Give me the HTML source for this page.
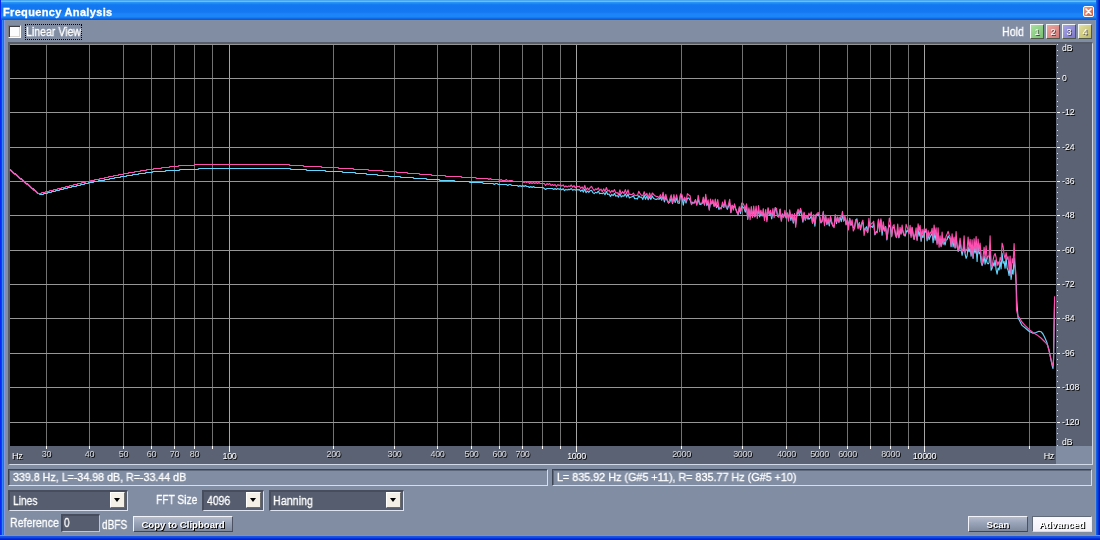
<!DOCTYPE html>
<html lang="en">
<head>
<meta charset="utf-8">
<title>Frequency Analysis</title>
<style>
*{box-sizing:border-box;margin:0;padding:0}
html,body{width:1100px;height:540px;overflow:hidden}
body{position:relative;background:#0a50e4;font-family:"Liberation Sans",sans-serif;font-size:11px;color:#fff}
.abs{position:absolute}
.t{position:absolute;white-space:nowrap;transform-origin:0 50%;line-height:1;will-change:transform;-webkit-text-stroke:0.3px #fff}
/* window frame */
#frameL{left:0;top:0;width:5px;height:540px;background:linear-gradient(to right,#0828f0 0px,#0828f0 1px,#0c3cf2 1px,#0c3cf2 2px,#3088ff 2px,#3088ff 3px,#2870d8 3px,#2870d8 4px,#8898dc 4px,#8898dc 5px)}
#frameR{left:1095px;top:0;width:5px;height:540px;background:linear-gradient(to right,#8292c4 0px,#8292c4 1px,#1460e8 1px,#1460e8 2px,#0848e4 2px,#0848e4 3px,#0430d4 3px,#0430d4 4px,#0018b8 4px,#0018b8 5px)}
#frameB{left:0;top:535px;width:1100px;height:5px;background:linear-gradient(to bottom,#7890d8 0px,#7890d8 1px,#1854e6 1px,#1854e6 2px,#0c4cee 2px,#0c4cee 3px,#0630d8 3px,#0630d8 4px,#0020cc 4px,#0020cc 5px)}
#title{left:1px;top:0;width:1095px;height:20px;background:linear-gradient(to bottom,#4ba8ee 0,#4ba8ee 1px,#5cc4fa 1px,#5cc4fa 2px,#2a94f6 2px,#2a94f6 3px,#167ef2 4px,#1276f0 6px,#1478f2 12px,#1c86f8 14px,#1c86f8 17px,#1270e8 18px,#0e62dc 19px,#0a56d0 20px)}
#title .t{left:2px;top:7px;font-weight:bold;font-size:11px;letter-spacing:0.33px}
#close{left:1083px;top:6px;width:11px;height:11px;border:1px solid #fff;border-radius:2px;background:linear-gradient(135deg,#eaa48c,#dc7858 60%,#c85838)}
#panel{left:4px;top:20px;width:1092px;height:515px;background:#808da3}
/* checkbox */
#chk{left:8px;top:25px;width:13px;height:13px;background:#fdfcff;border:1px solid;border-color:#7c7c80 #fff #fff #7c7c80;box-shadow:inset 1px 1px 0 #404044,inset -1px -1px 0 #d8d4d0}
#focus{left:25px;top:24px;width:57px;height:16px;border:1px dotted #000}
/* plot frame */
#pf{left:8px;top:42px;width:1085px;height:423px;border-top:2px solid #575e6a;border-left:2px solid #575e6a;border-right:1px solid #d2daea;border-bottom:1px solid #d2daea}
svg.plot{position:absolute;left:0;top:0;will-change:transform}
.btn,.hb{will-change:transform}
/* hold buttons */
.hb{position:absolute;top:24px;width:14px;height:15px;border-top:1px solid #f4f8f4;border-left:1px solid #f4f8f4;border-right:1px solid #50584c;border-bottom:1px solid #50584c;text-align:center;font-size:9px;line-height:15px;color:#fff;text-shadow:1px 1px 0 #404040}
/* status boxes */
.sb{position:absolute;top:469px;height:17px;border-top:1px solid #3c4454;border-left:1px solid #3c4454;border-right:1px solid #d6deee;border-bottom:1px solid #d6deee;background:#808da3;box-shadow:inset 1px 1px 0 #5e687c}
/* combos */
.cb{position:absolute;top:490px;height:21px;background:#565d6e;border-top:2px solid #474d5c;border-left:2px solid #474d5c;border-right:1px solid #dde3f0;border-bottom:1px solid #dde3f0}
.dd{position:absolute;right:2px;top:0;width:15px;height:16px;background:#f4f0e8;border-top:1px solid #fff;border-left:1px solid #fff;border-right:1px solid #6c6c6c;border-bottom:1px solid #6c6c6c}
.dd:after{content:"";position:absolute;left:3px;top:5px;border-left:3.5px solid transparent;border-right:3.5px solid transparent;border-top:4px solid #000}
/* buttons */
.btn{position:absolute;top:516px;height:16px;border-top:1px solid #f2f4fa;border-left:1px solid #f2f4fa;border-right:1px solid #4c5264;border-bottom:1px solid #5a3c50;background:linear-gradient(to bottom,#b4bccc 0,#98a2b8 45%,#808a9e 100%);text-align:center;font-weight:bold;font-size:9.6px;line-height:16px;color:#fff;text-shadow:1px 1px 0 #000;white-space:nowrap}
.btn.on{background:linear-gradient(to bottom,#fbfbff,#f2f0f6);border-color:#626a7a #eeeef4 #ecd0dc #626a7a}
</style>
</head>
<body>
<div id="panel" class="abs"></div>
<div id="frameL" class="abs"></div>
<div id="frameR" class="abs"></div>
<div id="frameB" class="abs"></div>
<div id="title" class="abs"><span class="t">Frequency Analysis</span></div>
<div id="close" class="abs"><svg width="9" height="9" viewBox="0 0 9 9" style="display:block"><path d="M2 2 L7 7 M7 2 L2 7" stroke="#fff" stroke-width="1.6" stroke-linecap="round" fill="none"/></svg></div>

<div id="chk" class="abs"></div>
<div id="focus" class="abs"></div>
<span class="t" id="lv" style="left:26px;top:26px;font-size:12px;transform:scaleX(0.88)">Linear View</span>

<span class="t" id="hold" style="left:1002px;top:26px;font-size:12px;transform:scaleX(0.89)">Hold</span>
<div class="hb" style="left:1030px;background:linear-gradient(135deg,#a8e0a0,#78c070)">1</div>
<div class="hb" style="left:1046px;background:linear-gradient(135deg,#eca8a0,#d07878)">2</div>
<div class="hb" style="left:1062px;background:linear-gradient(135deg,#a8a4e4,#7c78c8)">3</div>
<div class="hb" style="left:1078px;background:linear-gradient(135deg,#e4e0a0,#bcb868)">4</div>

<div id="pf" class="abs"></div>
<svg class="plot" width="1100" height="540" viewBox="0 0 1100 540">
<rect x="10" y="44" width="1046" height="402" fill="#000"/>
<rect x="1056" y="44" width="36" height="402" fill="#5b6273"/>
<rect x="10" y="446" width="1046" height="18" fill="#5b6273"/>
<g shape-rendering="crispEdges" fill="none">
<line x1="46.5" y1="44" x2="46.5" y2="446" stroke="#727272"/>
<line x1="89.5" y1="44" x2="89.5" y2="446" stroke="#727272"/>
<line x1="123.5" y1="44" x2="123.5" y2="446" stroke="#727272"/>
<line x1="151.5" y1="44" x2="151.5" y2="446" stroke="#727272"/>
<line x1="174.5" y1="44" x2="174.5" y2="446" stroke="#727272"/>
<line x1="194.5" y1="44" x2="194.5" y2="446" stroke="#727272"/>
<line x1="212.5" y1="44" x2="212.5" y2="446" stroke="#727272"/>
<line x1="229.5" y1="44" x2="229.5" y2="446" stroke="#a4a4a4"/>
<line x1="333.5" y1="44" x2="333.5" y2="446" stroke="#727272"/>
<line x1="394.5" y1="44" x2="394.5" y2="446" stroke="#727272"/>
<line x1="437.5" y1="44" x2="437.5" y2="446" stroke="#727272"/>
<line x1="471.5" y1="44" x2="471.5" y2="446" stroke="#727272"/>
<line x1="499.5" y1="44" x2="499.5" y2="446" stroke="#727272"/>
<line x1="522.5" y1="44" x2="522.5" y2="446" stroke="#727272"/>
<line x1="542.5" y1="44" x2="542.5" y2="446" stroke="#727272"/>
<line x1="560.5" y1="44" x2="560.5" y2="446" stroke="#727272"/>
<line x1="576.5" y1="44" x2="576.5" y2="446" stroke="#a4a4a4"/>
<line x1="681.5" y1="44" x2="681.5" y2="446" stroke="#727272"/>
<line x1="742.5" y1="44" x2="742.5" y2="446" stroke="#727272"/>
<line x1="786.5" y1="44" x2="786.5" y2="446" stroke="#727272"/>
<line x1="819.5" y1="44" x2="819.5" y2="446" stroke="#727272"/>
<line x1="847.5" y1="44" x2="847.5" y2="446" stroke="#727272"/>
<line x1="870.5" y1="44" x2="870.5" y2="446" stroke="#727272"/>
<line x1="890.5" y1="44" x2="890.5" y2="446" stroke="#727272"/>
<line x1="908.5" y1="44" x2="908.5" y2="446" stroke="#727272"/>
<line x1="924.5" y1="44" x2="924.5" y2="446" stroke="#a4a4a4"/>
<line x1="1029.5" y1="44" x2="1029.5" y2="446" stroke="#727272"/>
<line x1="10" y1="44.5" x2="1056" y2="44.5" stroke="#969696"/>
<line x1="10" y1="78.5" x2="1056" y2="78.5" stroke="#969696"/>
<line x1="10" y1="112.5" x2="1056" y2="112.5" stroke="#969696"/>
<line x1="10" y1="147.5" x2="1056" y2="147.5" stroke="#969696"/>
<line x1="10" y1="181.5" x2="1056" y2="181.5" stroke="#969696"/>
<line x1="10" y1="215.5" x2="1056" y2="215.5" stroke="#969696"/>
<line x1="10" y1="250.5" x2="1056" y2="250.5" stroke="#969696"/>
<line x1="10" y1="284.5" x2="1056" y2="284.5" stroke="#969696"/>
<line x1="10" y1="318.5" x2="1056" y2="318.5" stroke="#969696"/>
<line x1="10" y1="353.5" x2="1056" y2="353.5" stroke="#969696"/>
<line x1="10" y1="387.5" x2="1056" y2="387.5" stroke="#969696"/>
<line x1="10" y1="422.5" x2="1056" y2="422.5" stroke="#969696"/>
</g>
<g fill="none" stroke-width="1.15" stroke-linejoin="round">
<polyline stroke="#62d6ff" points="10.0,169.5 11.0,170.5 12.0,171.5 13.0,172.5 14.0,173.5 15.0,173.5 16.0,174.5 17.0,175.5 18.0,176.5 19.0,177.5 20.0,178.5 21.0,178.5 22.0,179.5 23.0,180.5 24.0,181.5 25.0,182.5 26.0,183.5 27.0,183.5 28.0,184.5 29.0,185.5 30.0,186.5 31.0,187.5 32.0,188.5 33.0,188.5 34.0,189.5 35.0,190.5 36.0,191.5 37.0,192.5 38.0,193.5 39.0,193.5 40.0,194.5 41.0,194.5 42.0,194.5 43.0,194.5 44.0,193.5 45.0,193.5 46.0,193.5 47.0,193.5 48.0,192.5 49.0,192.5 50.0,192.5 51.0,192.5 52.0,191.5 53.0,191.5 54.0,191.5 55.0,191.5 56.0,190.5 57.0,190.5 58.0,190.5 59.0,190.5 60.0,189.5 61.0,189.5 62.0,189.5 63.0,189.5 64.0,188.5 65.0,188.5 66.0,188.5 67.0,188.5 68.0,187.5 69.0,187.5 70.0,187.5 71.0,187.5 72.0,186.5 73.0,186.5 74.0,186.5 75.0,186.5 76.0,186.5 77.0,185.5 78.0,185.5 79.0,185.5 80.0,185.5 81.0,184.5 82.0,184.5 83.0,184.5 84.0,184.5 85.0,183.5 86.0,183.5 87.0,183.5 88.0,183.5 89.0,182.5 90.0,182.5 91.0,182.5 92.0,182.5 93.0,182.5 94.0,181.5 95.0,181.5 96.0,181.5 97.0,181.5 98.0,181.5 99.0,180.5 100.0,180.5 101.0,180.5 102.0,180.5 103.0,180.5 104.0,180.5 105.0,179.5 106.0,179.5 107.0,179.5 108.0,179.5 109.0,179.5 110.0,178.5 111.0,178.5 112.0,178.5 113.0,178.5 114.0,178.5 115.0,177.5 116.0,177.5 117.0,177.5 118.0,177.5 119.0,177.5 120.0,177.5 121.0,176.5 122.0,176.5 123.0,176.5 124.0,176.5 125.0,176.5 126.0,176.5 127.0,175.5 128.0,175.5 129.0,175.5 130.0,175.5 131.0,175.5 132.0,175.5 133.0,174.5 134.0,174.5 135.0,174.5 136.0,174.5 137.0,174.5 138.0,174.5 139.0,173.5 140.0,173.5 141.0,173.5 142.0,173.5 143.0,173.5 144.0,173.5 145.0,173.5 146.0,172.5 147.0,172.5 148.0,172.5 149.0,172.5 150.0,172.5 151.0,172.5 152.0,172.5 153.0,171.5 154.0,171.5 155.0,171.5 156.0,171.5 157.0,171.5 158.0,171.5 159.0,171.5 160.0,171.5 161.0,171.5 162.0,171.5 163.0,171.5 164.0,171.5 165.0,171.5 166.0,170.5 167.0,170.5 168.0,170.5 169.0,170.5 170.0,170.5 171.0,170.5 172.0,170.5 173.0,170.5 174.0,170.5 175.0,170.5 176.0,170.5 177.0,170.5 178.0,170.5 179.0,170.5 180.0,169.5 181.0,169.5 182.0,169.5 183.0,169.5 184.0,169.5 185.0,169.5 186.0,169.5 187.0,169.5 188.0,169.5 189.0,169.5 190.0,169.5 191.0,169.5 192.0,169.5 193.0,169.5 194.0,169.5 195.0,169.5 196.0,169.5 197.0,169.5 198.0,169.5 199.0,168.5 200.0,168.5 201.0,168.5 202.0,168.5 203.0,168.5 204.0,168.5 205.0,168.5 206.0,168.5 207.0,168.5 208.0,168.5 209.0,168.5 210.0,168.5 211.0,168.5 212.0,168.5 213.0,168.5 214.0,168.5 215.0,168.5 216.0,168.5 217.0,168.5 218.0,168.5 219.0,168.5 220.0,168.5 221.0,168.5 222.0,168.5 223.0,168.5 224.0,168.5 225.0,168.5 226.0,168.5 227.0,168.5 228.0,168.5 229.0,168.5 230.0,168.5 231.0,168.5 232.0,168.5 233.0,168.5 234.0,168.5 235.0,168.5 236.0,168.5 237.0,168.5 238.0,168.5 239.0,168.5 240.0,168.5 241.0,168.5 242.0,168.5 243.0,168.5 244.0,168.5 245.0,168.5 246.0,168.5 247.0,168.5 248.0,168.5 249.0,168.5 250.0,168.5 251.0,168.5 252.0,168.5 253.0,168.5 254.0,168.5 255.0,168.5 256.0,168.5 257.0,168.5 258.0,168.5 259.0,168.5 260.0,168.5 261.0,168.5 262.0,168.5 263.0,168.5 264.0,168.5 265.0,168.5 266.0,168.5 267.0,168.5 268.0,168.5 269.0,168.5 270.0,168.5 271.0,168.5 272.0,168.5 273.0,168.5 274.0,168.5 275.0,168.5 276.0,168.5 277.0,168.5 278.0,168.5 279.0,168.5 280.0,168.5 281.0,168.5 282.0,168.5 283.0,168.5 284.0,168.5 285.0,168.5 286.0,168.5 287.0,168.5 288.0,168.5 289.0,168.5 290.0,168.5 291.0,169.5 292.0,169.5 293.0,169.5 294.0,169.5 295.0,169.5 296.0,169.5 297.0,169.5 298.0,169.5 299.0,169.5 300.0,169.5 301.0,169.5 302.0,169.5 303.0,169.5 304.0,169.5 305.0,169.5 306.0,169.5 307.0,170.5 308.0,170.5 309.0,170.5 310.0,170.5 311.0,170.5 312.0,170.5 313.0,170.5 314.0,170.5 315.0,170.5 316.0,170.5 317.0,170.5 318.0,170.5 319.0,170.5 320.0,170.5 321.0,170.5 322.0,170.5 323.0,170.5 324.0,170.5 325.0,170.5 326.0,171.5 327.0,171.5 328.0,171.5 329.0,171.5 330.0,171.5 331.0,171.5 332.0,171.5 333.0,171.5 334.0,171.5 335.0,171.5 336.0,171.5 337.0,171.5 338.0,171.5 339.0,171.5 340.0,171.5 341.0,171.5 342.0,171.5 343.0,172.5 344.0,172.5 345.0,172.5 346.0,172.5 347.0,172.5 348.0,172.5 349.0,172.5 350.0,172.5 351.0,172.5 352.0,172.5 353.0,172.5 354.0,172.5 355.0,172.5 356.0,173.5 357.0,173.5 358.0,173.5 359.0,173.5 360.0,173.5 361.0,173.5 362.0,173.5 363.0,173.5 364.0,173.5 365.0,173.5 366.0,173.5 367.0,174.5 368.0,174.5 369.0,174.5 370.0,174.5 371.0,174.5 372.0,174.5 373.0,174.5 374.0,174.5 375.0,174.5 376.0,174.5 377.0,174.5 378.0,175.5 379.0,175.5 380.0,175.5 381.0,175.5 382.0,175.5 383.0,175.5 384.0,175.5 385.0,175.5 386.0,175.5 387.0,175.5 388.0,175.5 389.0,176.5 390.0,176.5 391.0,176.5 392.0,176.5 393.0,176.5 394.0,176.5 395.0,176.5 396.0,176.5 397.0,176.5 398.0,176.5 399.0,176.5 400.0,176.5 401.0,177.5 402.0,177.5 403.0,177.5 404.0,177.5 405.0,177.5 406.0,177.5 407.0,177.5 408.0,177.5 409.0,177.5 410.0,177.5 411.0,177.5 412.0,177.5 413.0,177.5 414.0,178.5 415.0,178.5 416.0,178.5 417.0,178.5 418.0,178.5 419.0,178.5 420.0,178.5 421.0,178.5 422.0,178.5 423.0,178.5 424.0,178.5 425.0,178.5 426.0,178.5 427.0,179.5 428.0,179.5 429.0,179.5 430.0,179.5 431.0,179.5 432.0,179.5 433.0,179.5 434.0,179.5 435.0,179.5 436.0,179.5 437.0,179.5 438.0,179.5 439.0,179.5 440.0,180.5 441.0,180.5 442.0,180.5 443.0,180.5 444.0,180.5 445.0,180.5 446.0,180.5 447.0,180.5 448.0,180.5 449.0,180.5 450.0,180.5 451.0,180.5 452.0,180.5 453.0,180.5 454.0,180.5 455.0,181.5 456.0,181.5 457.0,181.5 458.0,181.5 459.0,181.5 460.0,181.5 461.0,181.5 462.0,181.5 463.0,181.5 464.0,181.5 465.0,181.5 466.0,181.5 467.0,181.5 468.0,181.5 469.0,181.5 470.0,182.5 471.4,182.5 472.7,182.5 474.1,182.5 475.4,182.5 476.8,182.5 478.1,182.5 479.5,182.5 480.8,182.5 482.2,182.5 483.5,183.5 484.9,183.5 486.2,183.5 487.6,183.5 488.9,183.5 490.3,183.5 491.6,183.5 493.0,183.5 494.3,184.5 495.7,183.5 497.0,183.5 498.4,184.5 499.7,184.5 501.1,184.5 502.4,184.5 503.8,184.5 505.1,184.5 506.5,184.5 507.8,185.5 509.2,184.5 510.5,184.5 511.9,185.5 513.2,185.5 514.6,185.5 515.9,185.5 517.3,185.5 518.6,186.5 520.0,185.5 521.3,186.5 522.7,185.5 524.0,186.5 525.4,185.5 526.7,186.5 528.1,186.5 529.4,187.5 530.8,186.5 532.1,187.5 533.5,186.5 534.8,187.5 536.2,187.5 537.5,187.5 538.9,187.5 540.2,187.5 541.6,187.5 542.9,187.5 544.3,188.5 545.6,189.5 547.0,188.5 548.3,188.5 549.7,188.5 551.0,188.5 552.4,188.5 553.7,189.5 555.1,188.5 556.4,189.5 557.8,188.5 559.1,189.4 560.5,188.6 561.8,189.8 563.2,188.7 564.5,190.6 565.9,189.4 567.2,190.0 568.6,189.4 569.9,189.6 571.3,188.5 572.6,190.2 574.0,189.4 575.3,190.1 576.7,189.5 578.0,189.9 579.4,189.6 580.7,191.4 582.1,189.8 583.4,192.1 584.8,189.1 586.1,192.7 587.5,191.0 588.8,192.4 590.2,190.7 591.5,190.3 592.9,192.6 594.2,193.6 595.6,192.3 596.9,192.9 598.3,191.1 599.6,193.7 601.0,193.2 602.3,193.7 603.7,192.6 605.0,194.7 606.4,191.6 607.7,194.5 609.1,194.0 610.4,196.4 611.8,194.4 613.1,195.7 614.5,193.4 615.8,196.2 617.2,195.5 618.5,197.1 619.9,193.5 621.2,197.0 622.6,195.8 623.9,196.3 625.3,193.9 626.6,197.1 628.0,194.0 629.3,197.9 630.7,197.3 632.0,196.8 633.4,195.7 634.7,198.7 636.1,198.5 637.4,199.1 638.8,195.6 640.1,197.3 641.5,197.1 642.8,199.6 644.2,195.0 645.5,199.3 646.9,195.9 648.2,199.7 649.6,196.7 650.9,199.4 652.3,196.0 653.6,198.4 655.0,199.1 656.3,199.4 657.7,198.7 659.0,199.3 660.4,197.3 661.7,200.2 663.1,196.1 664.4,201.9 665.8,197.3 667.1,200.4 668.5,202.9 669.8,202.1 671.2,197.9 672.5,203.6 673.9,197.8 675.2,202.5 676.6,197.8 677.9,203.2 679.3,203.3 680.6,194.1 682.0,197.5 683.3,205.2 684.7,198.1 686.0,203.0 687.4,198.3 688.7,198.0 690.1,200.1 691.4,203.5 692.8,202.2 694.1,203.2 695.5,200.6 696.8,204.4 698.2,199.3 699.5,204.2 700.9,204.4 702.1,203.5 703.3,200.4 704.5,205.1 705.7,197.2 706.9,205.6 708.1,202.5 709.3,209.5 710.5,202.5 711.7,203.7 712.9,201.9 714.1,206.2 715.3,203.5 716.5,207.7 717.7,204.9 718.9,209.4 720.1,208.2 721.3,207.4 722.5,204.7 723.7,207.5 724.9,202.4 726.1,206.5 727.3,209.3 728.5,206.2 729.7,203.1 730.9,212.4 732.1,205.6 733.3,207.4 734.5,205.7 735.7,208.8 736.9,211.5 738.1,214.8 739.3,208.2 740.5,213.6 741.7,206.2 742.9,207.1 744.1,208.4 745.3,212.1 746.5,204.9 747.7,219.1 748.9,209.6 750.1,216.6 751.3,209.6 752.5,216.9 753.7,210.2 754.9,216.9 756.1,209.0 757.3,215.0 758.5,210.6 759.7,216.9 760.9,212.6 762.1,216.0 763.3,212.3 764.5,217.6 765.7,212.3 766.9,219.9 768.1,208.7 769.3,215.2 770.5,212.4 771.7,218.9 772.9,212.1 774.1,215.1 775.3,207.7 776.5,210.8 777.7,216.3 778.9,215.9 780.1,209.4 781.3,219.7 782.5,213.9 783.7,216.5 784.9,213.7 786.1,218.0 787.3,213.2 788.5,218.6 789.7,212.1 790.9,220.4 792.1,214.6 793.3,223.1 794.5,213.9 795.7,224.4 796.9,215.3 798.1,211.0 799.3,215.2 800.5,209.7 801.7,215.1 802.9,222.1 804.1,213.4 805.3,220.2 806.5,216.1 807.7,216.2 808.9,219.2 810.1,218.2 811.3,215.7 812.5,223.0 813.7,216.6 814.9,226.2 816.1,214.6 817.3,214.9 818.5,214.6 819.7,217.4 820.9,223.0 822.1,220.6 823.3,212.3 824.5,222.9 825.7,217.7 826.9,224.7 828.1,220.5 829.3,226.0 830.5,217.3 831.7,223.3 832.9,226.0 834.1,225.9 835.3,215.9 836.5,223.7 837.7,217.7 838.9,222.2 840.1,217.3 841.3,221.7 842.5,215.0 843.7,221.1 844.9,217.7 846.1,224.4 847.3,220.3 848.5,225.7 849.7,218.5 850.9,225.4 852.1,223.2 853.3,227.7 854.5,227.9 855.7,220.6 856.9,218.8 858.1,227.6 859.3,222.6 860.5,229.8 861.7,223.9 862.9,222.4 864.1,230.8 865.3,228.6 866.5,226.7 867.7,231.9 868.9,223.8 870.1,226.3 871.3,226.5 872.5,227.4 873.7,223.5 874.9,234.8 876.1,232.0 877.3,231.2 878.5,219.3 879.7,229.7 880.9,220.0 882.1,235.3 883.3,225.2 884.5,230.8 885.7,226.5 886.9,239.9 888.1,229.5 889.3,225.0 890.5,227.5 891.7,235.8 892.9,227.2 894.1,227.3 895.3,232.3 896.5,237.7 897.7,230.2 898.9,237.8 900.1,231.5 901.1,233.3 902.1,228.7 903.1,231.9 904.1,234.9 905.1,236.1 906.1,232.5 907.1,230.1 908.1,231.9 909.1,231.5 910.1,229.2 911.1,235.9 912.1,227.8 913.1,233.9 914.1,239.3 915.1,235.1 916.1,232.3 917.1,239.6 918.1,228.5 919.1,236.1 920.1,231.2 921.1,241.3 922.1,235.3 923.1,237.5 924.1,230.6 925.1,232.2 926.1,229.7 927.1,240.8 928.1,233.4 929.1,239.6 930.1,237.1 931.1,234.9 932.1,233.5 933.1,242.6 934.1,231.2 935.1,240.1 936.1,233.0 937.1,243.2 938.1,233.1 939.1,243.5 940.1,240.8 941.1,246.1 942.1,239.7 943.1,243.6 944.1,241.8 945.1,245.0 946.1,240.0 947.1,239.8 948.1,235.8 949.1,237.7 950.1,238.5 951.1,246.8 952.1,238.0 953.1,246.9 954.1,241.5 955.1,248.2 956.1,237.1 957.1,245.7 958.1,251.5 959.1,249.5 960.1,241.2 961.1,249.8 962.1,255.3 963.1,250.5 964.1,243.5 965.1,254.2 966.1,258.4 967.1,256.0 968.1,247.0 969.1,251.8 970.1,247.8 971.1,256.2 972.1,247.8 973.1,258.5 974.1,247.0 975.1,253.1 976.1,246.1 977.1,261.4 978.1,244.8 979.1,253.7 980.1,252.3 981.1,262.1 982.1,265.7 983.1,262.4 984.1,256.0 985.1,264.1 986.1,257.7 987.1,262.9 988.1,263.8 989.1,262.8 990.1,247.0 991.1,270.3 992.1,268.3 993.1,262.9 994.1,266.1 995.1,260.0 996.1,269.6 997.1,274.1 998.1,268.1 999.1,270.0 1000.1,261.7 1001.1,268.9 1002.1,253.4 1003.1,263.2 1004.1,261.6 1005.1,268.3 1006.1,257.9 1007.1,268.1 1008.1,270.2 1009.1,275.6 1010.1,265.1 1011.1,279.4 1012.1,269.9 1013.1,274.1 1014.1,258.1 1015.1,269.1 1016.3,285.0 1016.8,300.0 1018.0,317.6 1020.0,321.5 1022.0,325.4 1025.0,327.8 1029.0,331.3 1033.0,333.3 1036.0,332.5 1039.0,331.3 1041.0,331.7 1043.0,334.0 1045.0,338.0 1047.0,342.8 1049.0,350.0 1050.6,358.0 1052.0,365.0 1053.0,368.5 1053.6,359.0 1054.0,331.0 1054.6,300.0"/>
<polyline stroke="#ff4fb0" points="10.0,169.5 11.0,170.5 12.0,171.5 13.0,172.5 14.0,173.5 15.0,174.5 16.0,174.5 17.0,175.5 18.0,176.5 19.0,177.5 20.0,178.5 21.0,179.5 22.0,179.5 23.0,180.5 24.0,181.5 25.0,182.5 26.0,183.5 27.0,184.5 28.0,184.5 29.0,185.5 30.0,186.5 31.0,187.5 32.0,188.5 33.0,189.5 34.0,190.5 35.0,190.5 36.0,191.5 37.0,192.5 38.0,193.5 39.0,193.5 40.0,193.5 41.0,193.5 42.0,192.5 43.0,192.5 44.0,192.5 45.0,192.5 46.0,191.5 47.0,191.5 48.0,191.5 49.0,191.5 50.0,190.5 51.0,190.5 52.0,190.5 53.0,190.5 54.0,189.5 55.0,189.5 56.0,189.5 57.0,189.5 58.0,188.5 59.0,188.5 60.0,188.5 61.0,188.5 62.0,187.5 63.0,187.5 64.0,187.5 65.0,187.5 66.0,186.5 67.0,186.5 68.0,186.5 69.0,186.5 70.0,185.5 71.0,185.5 72.0,185.5 73.0,185.5 74.0,184.5 75.0,184.5 76.0,184.5 77.0,184.5 78.0,183.5 79.0,183.5 80.0,183.5 81.0,183.5 82.0,182.5 83.0,182.5 84.0,182.5 85.0,182.5 86.0,181.5 87.0,181.5 88.0,181.5 89.0,181.5 90.0,181.5 91.0,180.5 92.0,180.5 93.0,180.5 94.0,180.5 95.0,179.5 96.0,179.5 97.0,179.5 98.0,179.5 99.0,179.5 100.0,178.5 101.0,178.5 102.0,178.5 103.0,178.5 104.0,178.5 105.0,177.5 106.0,177.5 107.0,177.5 108.0,177.5 109.0,176.5 110.0,176.5 111.0,176.5 112.0,176.5 113.0,176.5 114.0,175.5 115.0,175.5 116.0,175.5 117.0,175.5 118.0,175.5 119.0,174.5 120.0,174.5 121.0,174.5 122.0,174.5 123.0,174.5 124.0,173.5 125.0,173.5 126.0,173.5 127.0,173.5 128.0,173.5 129.0,172.5 130.0,172.5 131.0,172.5 132.0,172.5 133.0,172.5 134.0,172.5 135.0,171.5 136.0,171.5 137.0,171.5 138.0,171.5 139.0,171.5 140.0,171.5 141.0,170.5 142.0,170.5 143.0,170.5 144.0,170.5 145.0,170.5 146.0,170.5 147.0,169.5 148.0,169.5 149.0,169.5 150.0,169.5 151.0,169.5 152.0,169.5 153.0,169.5 154.0,168.5 155.0,168.5 156.0,168.5 157.0,168.5 158.0,168.5 159.0,168.5 160.0,168.5 161.0,168.5 162.0,167.5 163.0,167.5 164.0,167.5 165.0,167.5 166.0,167.5 167.0,167.5 168.0,167.5 169.0,167.5 170.0,166.5 171.0,166.5 172.0,166.5 173.0,166.5 174.0,166.5 175.0,166.5 176.0,166.5 177.0,166.5 178.0,166.5 179.0,165.5 180.0,165.5 181.0,165.5 182.0,165.5 183.0,165.5 184.0,165.5 185.0,165.5 186.0,165.5 187.0,165.5 188.0,165.5 189.0,165.5 190.0,165.5 191.0,165.5 192.0,165.5 193.0,165.5 194.0,165.5 195.0,164.5 196.0,164.5 197.0,164.5 198.0,164.5 199.0,164.5 200.0,164.5 201.0,164.5 202.0,164.5 203.0,164.5 204.0,164.5 205.0,164.5 206.0,164.5 207.0,164.5 208.0,164.5 209.0,164.5 210.0,164.5 211.0,164.5 212.0,164.5 213.0,164.5 214.0,164.5 215.0,164.5 216.0,164.5 217.0,164.5 218.0,164.5 219.0,164.5 220.0,164.5 221.0,164.5 222.0,164.5 223.0,164.5 224.0,164.5 225.0,164.5 226.0,164.5 227.0,164.5 228.0,164.5 229.0,164.5 230.0,164.5 231.0,164.5 232.0,164.5 233.0,164.5 234.0,164.5 235.0,164.5 236.0,164.5 237.0,164.5 238.0,164.5 239.0,164.5 240.0,164.5 241.0,164.5 242.0,164.5 243.0,164.5 244.0,164.5 245.0,164.5 246.0,164.5 247.0,164.5 248.0,164.5 249.0,164.5 250.0,164.5 251.0,164.5 252.0,164.5 253.0,164.5 254.0,164.5 255.0,164.5 256.0,164.5 257.0,164.5 258.0,164.5 259.0,164.5 260.0,164.5 261.0,164.5 262.0,164.5 263.0,164.5 264.0,164.5 265.0,164.5 266.0,164.5 267.0,164.5 268.0,164.5 269.0,164.5 270.0,164.5 271.0,164.5 272.0,164.5 273.0,164.5 274.0,164.5 275.0,164.5 276.0,164.5 277.0,164.5 278.0,164.5 279.0,164.5 280.0,164.5 281.0,164.5 282.0,164.5 283.0,164.5 284.0,164.5 285.0,164.5 286.0,164.5 287.0,164.5 288.0,164.5 289.0,164.5 290.0,165.5 291.0,165.5 292.0,165.5 293.0,165.5 294.0,165.5 295.0,165.5 296.0,165.5 297.0,165.5 298.0,165.5 299.0,165.5 300.0,165.5 301.0,165.5 302.0,165.5 303.0,165.5 304.0,166.5 305.0,166.5 306.0,166.5 307.0,166.5 308.0,166.5 309.0,166.5 310.0,166.5 311.0,166.5 312.0,166.5 313.0,166.5 314.0,166.5 315.0,166.5 316.0,166.5 317.0,166.5 318.0,166.5 319.0,166.5 320.0,166.5 321.0,166.5 322.0,167.5 323.0,167.5 324.0,167.5 325.0,167.5 326.0,167.5 327.0,167.5 328.0,167.5 329.0,167.5 330.0,167.5 331.0,167.5 332.0,167.5 333.0,167.5 334.0,167.5 335.0,167.5 336.0,167.5 337.0,167.5 338.0,167.5 339.0,168.5 340.0,168.5 341.0,168.5 342.0,168.5 343.0,168.5 344.0,168.5 345.0,168.5 346.0,168.5 347.0,168.5 348.0,168.5 349.0,168.5 350.0,168.5 351.0,168.5 352.0,168.5 353.0,168.5 354.0,169.5 355.0,169.5 356.0,169.5 357.0,169.5 358.0,169.5 359.0,169.5 360.0,169.5 361.0,169.5 362.0,169.5 363.0,169.5 364.0,169.5 365.0,169.5 366.0,169.5 367.0,169.5 368.0,169.5 369.0,170.5 370.0,170.5 371.0,170.5 372.0,170.5 373.0,170.5 374.0,170.5 375.0,170.5 376.0,170.5 377.0,170.5 378.0,170.5 379.0,170.5 380.0,170.5 381.0,170.5 382.0,170.5 383.0,171.5 384.0,171.5 385.0,171.5 386.0,171.5 387.0,171.5 388.0,171.5 389.0,171.5 390.0,171.5 391.0,171.5 392.0,171.5 393.0,171.5 394.0,171.5 395.0,171.5 396.0,171.5 397.0,172.5 398.0,172.5 399.0,172.5 400.0,172.5 401.0,172.5 402.0,172.5 403.0,172.5 404.0,172.5 405.0,172.5 406.0,172.5 407.0,172.5 408.0,173.5 409.0,173.5 410.0,173.5 411.0,173.5 412.0,173.5 413.0,173.5 414.0,173.5 415.0,173.5 416.0,173.5 417.0,173.5 418.0,173.5 419.0,173.5 420.0,174.5 421.0,174.5 422.0,174.5 423.0,174.5 424.0,174.5 425.0,174.5 426.0,174.5 427.0,174.5 428.0,174.5 429.0,174.5 430.0,174.5 431.0,174.5 432.0,175.5 433.0,175.5 434.0,175.5 435.0,175.5 436.0,175.5 437.0,175.5 438.0,175.5 439.0,175.5 440.0,175.5 441.0,175.5 442.0,175.5 443.0,175.5 444.0,175.5 445.0,175.5 446.0,176.5 447.0,176.5 448.0,176.5 449.0,176.5 450.0,176.5 451.0,176.5 452.0,176.5 453.0,176.5 454.0,176.5 455.0,176.5 456.0,176.5 457.0,176.5 458.0,176.5 459.0,176.5 460.0,176.5 461.0,176.5 462.0,177.5 463.0,177.5 464.0,177.5 465.0,177.5 466.0,177.5 467.0,177.5 468.0,177.5 469.0,177.5 470.0,177.5 471.4,177.5 472.7,177.5 474.1,177.5 475.4,177.5 476.8,178.5 478.1,178.5 479.5,178.5 480.8,178.5 482.2,178.5 483.5,178.5 484.9,178.5 486.2,178.5 487.6,178.5 488.9,179.5 490.3,178.5 491.6,179.5 493.0,179.5 494.3,179.5 495.7,179.5 497.0,179.5 498.4,179.5 499.7,180.5 501.1,179.5 502.4,180.5 503.8,180.5 505.1,180.5 506.5,179.5 507.8,181.5 509.2,180.5 510.5,180.5 511.9,180.5 513.2,181.5 514.6,181.5 515.9,181.5 517.3,181.5 518.6,181.5 520.0,181.5 521.3,181.5 522.7,181.5 524.0,182.5 525.4,181.5 526.7,182.5 528.1,181.5 529.4,183.5 530.8,182.5 532.1,183.5 533.5,182.5 534.8,183.5 536.2,182.5 537.5,183.5 538.9,182.5 540.2,183.5 541.6,183.5 542.9,183.5 544.3,183.5 545.6,185.5 547.0,183.5 548.3,184.5 549.7,183.5 551.0,185.5 552.4,184.5 553.7,185.5 555.1,184.5 556.4,186.5 557.8,184.5 559.1,185.6 560.5,184.8 561.8,186.1 563.2,184.9 564.5,187.0 565.9,185.9 567.2,187.0 568.6,185.9 569.9,186.5 571.3,185.0 572.6,187.1 574.0,185.6 575.3,187.9 576.7,186.1 578.0,186.7 579.4,186.2 580.7,188.4 582.1,186.9 583.4,189.2 584.8,185.4 586.1,190.2 587.5,187.9 588.8,189.9 590.2,187.5 591.5,186.4 592.9,188.7 594.2,190.6 595.6,188.8 596.9,189.7 598.3,187.8 599.6,190.7 601.0,189.0 602.3,191.7 603.7,188.8 605.0,191.5 606.4,187.5 607.7,191.2 609.1,190.1 610.4,192.8 611.8,190.5 613.1,192.0 614.5,189.6 615.8,193.1 617.2,192.5 618.5,194.7 619.9,189.9 621.2,194.0 622.6,191.6 623.9,193.5 625.3,189.6 626.6,193.9 628.0,189.9 629.3,194.5 630.7,194.3 632.0,194.7 633.4,193.0 634.7,195.5 636.1,195.2 637.4,195.6 638.8,191.3 640.1,193.7 641.5,195.3 642.8,195.7 644.2,191.7 645.5,195.6 646.9,193.3 648.2,198.2 649.6,193.0 650.9,197.5 652.3,193.0 653.6,194.5 655.0,195.8 656.3,196.6 657.7,196.5 659.0,197.9 660.4,194.7 661.7,198.9 663.1,192.4 664.4,199.8 665.8,194.4 667.1,199.6 668.5,203.1 669.8,199.2 671.2,194.8 672.5,202.9 673.9,194.6 675.2,200.8 676.6,194.8 677.9,201.0 679.3,201.6 680.6,194.0 682.0,194.7 683.3,200.9 684.7,197.2 686.0,202.0 687.4,193.7 688.7,194.9 690.1,195.8 691.4,204.7 692.8,202.9 694.1,202.4 695.5,199.6 696.8,205.5 698.2,195.4 699.5,202.8 700.9,203.5 702.1,202.9 703.3,197.2 704.5,204.5 705.7,194.3 706.9,204.0 708.1,199.8 709.3,210.3 710.5,199.1 711.7,204.0 712.9,199.7 714.1,206.4 715.3,199.1 716.5,206.5 717.7,199.6 718.9,206.9 720.1,208.7 721.3,208.9 722.5,202.1 723.7,207.4 724.9,199.8 726.1,207.2 727.3,208.0 728.5,204.2 729.7,199.4 730.9,212.7 732.1,205.1 733.3,210.2 734.5,203.9 735.7,209.0 736.9,212.5 738.1,214.2 739.3,206.7 740.5,211.3 741.7,203.1 742.9,203.3 744.1,205.5 745.3,210.2 746.5,203.8 747.7,219.5 748.9,207.8 750.1,219.8 751.3,206.6 752.5,217.5 753.7,206.0 754.9,216.7 756.1,206.0 757.3,218.4 758.5,205.6 759.7,214.9 760.9,210.2 762.1,215.6 763.3,208.7 764.5,220.4 765.7,209.6 766.9,221.7 768.1,207.7 769.3,214.3 770.5,210.2 771.7,216.7 772.9,208.5 774.1,217.8 775.3,207.8 776.5,208.6 777.7,216.5 778.9,217.4 780.1,209.1 781.3,221.3 782.5,214.8 783.7,217.5 784.9,210.3 786.1,217.6 787.3,212.8 788.5,221.1 789.7,209.9 790.9,217.8 792.1,214.1 793.3,221.6 794.5,213.6 795.7,227.3 796.9,212.4 798.1,209.2 799.3,213.5 800.5,208.4 801.7,212.0 802.9,220.8 804.1,212.2 805.3,220.0 806.5,215.3 807.7,219.2 808.9,213.1 810.1,216.0 811.3,212.0 812.5,223.3 813.7,214.6 814.9,223.7 816.1,215.8 817.3,213.1 818.5,212.7 819.7,216.3 820.9,222.3 822.1,221.8 823.3,211.3 824.5,225.8 825.7,215.0 826.9,223.8 828.1,218.1 829.3,224.1 830.5,216.3 831.7,221.5 832.9,225.9 834.1,227.6 835.3,214.6 836.5,222.0 837.7,216.9 838.9,222.3 840.1,216.8 841.3,217.0 842.5,211.3 843.7,221.0 844.9,215.5 846.1,224.9 847.3,218.4 848.5,229.9 849.7,218.4 850.9,224.4 852.1,219.8 853.3,230.9 854.5,228.5 855.7,219.6 856.9,220.7 858.1,228.8 859.3,223.3 860.5,228.8 861.7,222.8 862.9,220.2 864.1,235.4 865.3,228.4 866.5,230.5 867.7,232.7 868.9,218.3 870.1,227.8 871.3,223.2 872.5,223.1 873.7,221.2 874.9,234.1 876.1,232.5 877.3,232.7 878.5,219.2 879.7,231.7 880.9,218.8 882.1,231.2 883.3,221.9 884.5,230.8 885.7,227.4 886.9,238.9 888.1,231.0 889.3,218.0 890.5,222.5 891.7,236.8 892.9,226.2 894.1,224.7 895.3,234.9 896.5,237.5 897.7,224.1 898.9,236.9 900.1,227.3 901.1,234.3 902.1,225.0 903.1,232.8 904.1,235.5 905.1,234.2 906.1,224.4 907.1,227.1 908.1,229.6 909.1,234.0 910.1,225.3 911.1,237.5 912.1,227.2 913.1,236.0 914.1,239.3 915.1,234.6 916.1,227.8 917.1,240.5 918.1,223.9 919.1,230.7 920.1,225.4 921.1,239.8 922.1,229.3 923.1,235.7 924.1,228.9 925.1,230.6 926.1,228.8 927.1,239.3 928.1,230.6 929.1,236.8 930.1,232.1 931.1,233.3 932.1,228.4 933.1,238.2 934.1,225.0 935.1,235.1 936.1,227.9 937.1,244.5 938.1,227.9 939.1,247.2 940.1,235.9 941.1,246.7 942.1,232.0 943.1,244.7 944.1,238.1 945.1,241.9 946.1,236.2 947.1,234.0 948.1,231.4 949.1,234.7 950.1,236.7 951.1,246.0 952.1,233.8 953.1,243.2 954.1,237.1 955.1,247.3 956.1,231.5 957.1,247.0 958.1,250.4 959.1,245.1 960.1,238.2 961.1,247.0 962.1,251.8 963.1,248.8 964.1,235.9 965.1,252.8 966.1,249.8 967.1,249.4 968.1,237.0 969.1,249.3 970.1,239.4 971.1,253.6 972.1,239.7 973.1,257.7 974.1,238.7 975.1,250.2 976.1,236.5 977.1,253.3 978.1,239.0 979.1,251.2 980.1,243.1 981.1,255.9 982.1,264.3 983.1,256.3 984.1,247.2 985.1,258.0 986.1,245.8 987.1,259.4 988.1,256.1 989.1,255.9 990.1,235.8 991.1,264.8 992.1,267.3 993.1,259.8 994.1,255.5 995.1,253.5 996.1,257.5 997.1,265.6 998.1,261.7 999.1,265.2 1000.1,257.5 1001.1,260.3 1002.1,243.2 1003.1,246.5 1004.1,254.8 1005.1,258.4 1006.1,252.5 1007.1,259.2 1008.1,256.7 1009.1,269.9 1010.1,256.0 1011.1,275.1 1012.1,258.7 1013.1,262.9 1014.1,243.5 1015.1,264.8 1016.0,275.0 1016.5,310.0 1018.0,316.0 1020.0,318.5 1021.5,321.5 1025.0,325.4 1029.0,329.4 1033.0,332.5 1037.0,334.9 1041.0,338.0 1045.0,342.0 1047.5,345.0 1049.0,350.6 1050.6,357.7 1052.0,364.0 1052.8,366.0 1053.5,359.0 1054.0,331.0 1054.6,296.3"/>
</g>
<g shape-rendering="crispEdges" stroke="#fff">
<line x1="46.5" y1="446" x2="46.5" y2="449"/>
<line x1="89.5" y1="446" x2="89.5" y2="449"/>
<line x1="123.5" y1="446" x2="123.5" y2="449"/>
<line x1="151.5" y1="446" x2="151.5" y2="449"/>
<line x1="174.5" y1="446" x2="174.5" y2="449"/>
<line x1="194.5" y1="446" x2="194.5" y2="449"/>
<line x1="212.5" y1="446" x2="212.5" y2="449"/>
<line x1="229.5" y1="446" x2="229.5" y2="452"/>
<line x1="333.5" y1="446" x2="333.5" y2="449"/>
<line x1="394.5" y1="446" x2="394.5" y2="449"/>
<line x1="437.5" y1="446" x2="437.5" y2="449"/>
<line x1="471.5" y1="446" x2="471.5" y2="449"/>
<line x1="499.5" y1="446" x2="499.5" y2="449"/>
<line x1="522.5" y1="446" x2="522.5" y2="449"/>
<line x1="542.5" y1="446" x2="542.5" y2="449"/>
<line x1="560.5" y1="446" x2="560.5" y2="449"/>
<line x1="576.5" y1="446" x2="576.5" y2="452"/>
<line x1="681.5" y1="446" x2="681.5" y2="449"/>
<line x1="742.5" y1="446" x2="742.5" y2="449"/>
<line x1="786.5" y1="446" x2="786.5" y2="449"/>
<line x1="819.5" y1="446" x2="819.5" y2="449"/>
<line x1="847.5" y1="446" x2="847.5" y2="449"/>
<line x1="870.5" y1="446" x2="870.5" y2="449"/>
<line x1="890.5" y1="446" x2="890.5" y2="449"/>
<line x1="908.5" y1="446" x2="908.5" y2="449"/>
<line x1="924.5" y1="446" x2="924.5" y2="452"/>
<line x1="1029.5" y1="446" x2="1029.5" y2="449"/>
<line x1="1057" y1="44.5" x2="1058" y2="44.5" stroke="#e0e2e8"/>
<line x1="1057" y1="50.5" x2="1058" y2="50.5" stroke="#e0e2e8"/>
<line x1="1057" y1="55.5" x2="1058" y2="55.5" stroke="#e0e2e8"/>
<line x1="1057" y1="61.5" x2="1058" y2="61.5" stroke="#e0e2e8"/>
<line x1="1057" y1="67.5" x2="1058" y2="67.5" stroke="#e0e2e8"/>
<line x1="1057" y1="72.5" x2="1058" y2="72.5" stroke="#e0e2e8"/>
<line x1="1057" y1="78.5" x2="1060" y2="78.5"/>
<line x1="1057" y1="84.5" x2="1058" y2="84.5" stroke="#e0e2e8"/>
<line x1="1057" y1="89.5" x2="1058" y2="89.5" stroke="#e0e2e8"/>
<line x1="1057" y1="95.5" x2="1058" y2="95.5" stroke="#e0e2e8"/>
<line x1="1057" y1="101.5" x2="1058" y2="101.5" stroke="#e0e2e8"/>
<line x1="1057" y1="106.5" x2="1058" y2="106.5" stroke="#e0e2e8"/>
<line x1="1057" y1="112.5" x2="1060" y2="112.5"/>
<line x1="1057" y1="118.5" x2="1058" y2="118.5" stroke="#e0e2e8"/>
<line x1="1057" y1="124.5" x2="1058" y2="124.5" stroke="#e0e2e8"/>
<line x1="1057" y1="130.5" x2="1058" y2="130.5" stroke="#e0e2e8"/>
<line x1="1057" y1="135.5" x2="1058" y2="135.5" stroke="#e0e2e8"/>
<line x1="1057" y1="141.5" x2="1058" y2="141.5" stroke="#e0e2e8"/>
<line x1="1057" y1="147.5" x2="1060" y2="147.5"/>
<line x1="1057" y1="153.5" x2="1058" y2="153.5" stroke="#e0e2e8"/>
<line x1="1057" y1="158.5" x2="1058" y2="158.5" stroke="#e0e2e8"/>
<line x1="1057" y1="164.5" x2="1058" y2="164.5" stroke="#e0e2e8"/>
<line x1="1057" y1="170.5" x2="1058" y2="170.5" stroke="#e0e2e8"/>
<line x1="1057" y1="175.5" x2="1058" y2="175.5" stroke="#e0e2e8"/>
<line x1="1057" y1="181.5" x2="1060" y2="181.5"/>
<line x1="1057" y1="187.5" x2="1058" y2="187.5" stroke="#e0e2e8"/>
<line x1="1057" y1="192.5" x2="1058" y2="192.5" stroke="#e0e2e8"/>
<line x1="1057" y1="198.5" x2="1058" y2="198.5" stroke="#e0e2e8"/>
<line x1="1057" y1="204.5" x2="1058" y2="204.5" stroke="#e0e2e8"/>
<line x1="1057" y1="209.5" x2="1058" y2="209.5" stroke="#e0e2e8"/>
<line x1="1057" y1="215.5" x2="1060" y2="215.5"/>
<line x1="1057" y1="221.5" x2="1058" y2="221.5" stroke="#e0e2e8"/>
<line x1="1057" y1="227.5" x2="1058" y2="227.5" stroke="#e0e2e8"/>
<line x1="1057" y1="232.5" x2="1058" y2="232.5" stroke="#e0e2e8"/>
<line x1="1057" y1="238.5" x2="1058" y2="238.5" stroke="#e0e2e8"/>
<line x1="1057" y1="244.5" x2="1058" y2="244.5" stroke="#e0e2e8"/>
<line x1="1057" y1="250.5" x2="1060" y2="250.5"/>
<line x1="1057" y1="256.5" x2="1058" y2="256.5" stroke="#e0e2e8"/>
<line x1="1057" y1="261.5" x2="1058" y2="261.5" stroke="#e0e2e8"/>
<line x1="1057" y1="267.5" x2="1058" y2="267.5" stroke="#e0e2e8"/>
<line x1="1057" y1="273.5" x2="1058" y2="273.5" stroke="#e0e2e8"/>
<line x1="1057" y1="278.5" x2="1058" y2="278.5" stroke="#e0e2e8"/>
<line x1="1057" y1="284.5" x2="1060" y2="284.5"/>
<line x1="1057" y1="290.5" x2="1058" y2="290.5" stroke="#e0e2e8"/>
<line x1="1057" y1="295.5" x2="1058" y2="295.5" stroke="#e0e2e8"/>
<line x1="1057" y1="301.5" x2="1058" y2="301.5" stroke="#e0e2e8"/>
<line x1="1057" y1="307.5" x2="1058" y2="307.5" stroke="#e0e2e8"/>
<line x1="1057" y1="312.5" x2="1058" y2="312.5" stroke="#e0e2e8"/>
<line x1="1057" y1="318.5" x2="1060" y2="318.5"/>
<line x1="1057" y1="324.5" x2="1058" y2="324.5" stroke="#e0e2e8"/>
<line x1="1057" y1="330.5" x2="1058" y2="330.5" stroke="#e0e2e8"/>
<line x1="1057" y1="336.5" x2="1058" y2="336.5" stroke="#e0e2e8"/>
<line x1="1057" y1="341.5" x2="1058" y2="341.5" stroke="#e0e2e8"/>
<line x1="1057" y1="347.5" x2="1058" y2="347.5" stroke="#e0e2e8"/>
<line x1="1057" y1="353.5" x2="1060" y2="353.5"/>
<line x1="1057" y1="359.5" x2="1058" y2="359.5" stroke="#e0e2e8"/>
<line x1="1057" y1="364.5" x2="1058" y2="364.5" stroke="#e0e2e8"/>
<line x1="1057" y1="370.5" x2="1058" y2="370.5" stroke="#e0e2e8"/>
<line x1="1057" y1="376.5" x2="1058" y2="376.5" stroke="#e0e2e8"/>
<line x1="1057" y1="381.5" x2="1058" y2="381.5" stroke="#e0e2e8"/>
<line x1="1057" y1="387.5" x2="1060" y2="387.5"/>
<line x1="1057" y1="393.5" x2="1058" y2="393.5" stroke="#e0e2e8"/>
<line x1="1057" y1="399.5" x2="1058" y2="399.5" stroke="#e0e2e8"/>
<line x1="1057" y1="404.5" x2="1058" y2="404.5" stroke="#e0e2e8"/>
<line x1="1057" y1="410.5" x2="1058" y2="410.5" stroke="#e0e2e8"/>
<line x1="1057" y1="416.5" x2="1058" y2="416.5" stroke="#e0e2e8"/>
<line x1="1057" y1="422.5" x2="1060" y2="422.5"/>
<line x1="1057" y1="428.5" x2="1058" y2="428.5" stroke="#e0e2e8"/>
<line x1="1057" y1="433.5" x2="1058" y2="433.5" stroke="#e0e2e8"/>
<line x1="1057" y1="439.5" x2="1058" y2="439.5" stroke="#e0e2e8"/>
<line x1="1057" y1="445.5" x2="1058" y2="445.5" stroke="#e0e2e8"/>
</g>
<g font-family="'Liberation Sans', sans-serif" font-size="9px" letter-spacing="-0.35">
<text x="47.5" y="457.8" text-anchor="middle" fill="#000" >30</text><text x="46.5" y="456.8" text-anchor="middle" fill="#d4d6dc" >30</text>
<text x="90.5" y="457.8" text-anchor="middle" fill="#000" >40</text><text x="89.5" y="456.8" text-anchor="middle" fill="#d4d6dc" >40</text>
<text x="124.5" y="457.8" text-anchor="middle" fill="#000" >50</text><text x="123.5" y="456.8" text-anchor="middle" fill="#d4d6dc" >50</text>
<text x="152.5" y="457.8" text-anchor="middle" fill="#000" >60</text><text x="151.5" y="456.8" text-anchor="middle" fill="#d4d6dc" >60</text>
<text x="175.5" y="457.8" text-anchor="middle" fill="#000" >70</text><text x="174.5" y="456.8" text-anchor="middle" fill="#d4d6dc" >70</text>
<text x="195.5" y="457.8" text-anchor="middle" fill="#000" >80</text><text x="194.5" y="456.8" text-anchor="middle" fill="#d4d6dc" >80</text>
<text x="230.5" y="459.5" text-anchor="middle" fill="#000" >100</text><text x="229.5" y="458.5" text-anchor="middle" fill="#fff" >100</text>
<text x="334.5" y="457.8" text-anchor="middle" fill="#000" >200</text><text x="333.5" y="456.8" text-anchor="middle" fill="#d4d6dc" >200</text>
<text x="395.5" y="457.8" text-anchor="middle" fill="#000" >300</text><text x="394.5" y="456.8" text-anchor="middle" fill="#d4d6dc" >300</text>
<text x="438.5" y="457.8" text-anchor="middle" fill="#000" >400</text><text x="437.5" y="456.8" text-anchor="middle" fill="#d4d6dc" >400</text>
<text x="472.5" y="457.8" text-anchor="middle" fill="#000" >500</text><text x="471.5" y="456.8" text-anchor="middle" fill="#d4d6dc" >500</text>
<text x="500.5" y="457.8" text-anchor="middle" fill="#000" >600</text><text x="499.5" y="456.8" text-anchor="middle" fill="#d4d6dc" >600</text>
<text x="523.5" y="457.8" text-anchor="middle" fill="#000" >700</text><text x="522.5" y="456.8" text-anchor="middle" fill="#d4d6dc" >700</text>
<text x="577.5" y="459.5" text-anchor="middle" fill="#000" >1000</text><text x="576.5" y="458.5" text-anchor="middle" fill="#fff" >1000</text>
<text x="682.5" y="457.8" text-anchor="middle" fill="#000" >2000</text><text x="681.5" y="456.8" text-anchor="middle" fill="#d4d6dc" >2000</text>
<text x="743.5" y="457.8" text-anchor="middle" fill="#000" >3000</text><text x="742.5" y="456.8" text-anchor="middle" fill="#d4d6dc" >3000</text>
<text x="787.5" y="457.8" text-anchor="middle" fill="#000" >4000</text><text x="786.5" y="456.8" text-anchor="middle" fill="#d4d6dc" >4000</text>
<text x="820.5" y="457.8" text-anchor="middle" fill="#000" >5000</text><text x="819.5" y="456.8" text-anchor="middle" fill="#d4d6dc" >5000</text>
<text x="848.5" y="457.8" text-anchor="middle" fill="#000" >6000</text><text x="847.5" y="456.8" text-anchor="middle" fill="#d4d6dc" >6000</text>
<text x="891.5" y="457.8" text-anchor="middle" fill="#000" >8000</text><text x="890.5" y="456.8" text-anchor="middle" fill="#d4d6dc" >8000</text>
<text x="925.5" y="459.5" text-anchor="middle" fill="#000" >10000</text><text x="924.5" y="458.5" text-anchor="middle" fill="#fff" >10000</text>
<text x="13.0" y="460.0" text-anchor="start" fill="#000" >Hz</text><text x="12.0" y="459.0" text-anchor="start" fill="#fff" >Hz</text>
<text x="1055.0" y="460.0" text-anchor="end" fill="#000" >Hz</text><text x="1054.0" y="459.0" text-anchor="end" fill="#fff" >Hz</text>
<text x="1063.0" y="81.9" text-anchor="start" fill="#000" font-size="9.5px" letter-spacing="0" textLength="4.8" lengthAdjust="spacingAndGlyphs">0</text><text x="1062.0" y="80.9" text-anchor="start" fill="#fff" font-size="9.5px" letter-spacing="0" textLength="4.8" lengthAdjust="spacingAndGlyphs">0</text>
<text x="1063.0" y="115.9" text-anchor="start" fill="#000" font-size="9.5px" letter-spacing="0" textLength="12.6" lengthAdjust="spacingAndGlyphs">-12</text><text x="1062.0" y="114.9" text-anchor="start" fill="#fff" font-size="9.5px" letter-spacing="0" textLength="12.6" lengthAdjust="spacingAndGlyphs">-12</text>
<text x="1063.0" y="150.9" text-anchor="start" fill="#000" font-size="9.5px" letter-spacing="0" textLength="12.6" lengthAdjust="spacingAndGlyphs">-24</text><text x="1062.0" y="149.9" text-anchor="start" fill="#fff" font-size="9.5px" letter-spacing="0" textLength="12.6" lengthAdjust="spacingAndGlyphs">-24</text>
<text x="1063.0" y="184.9" text-anchor="start" fill="#000" font-size="9.5px" letter-spacing="0" textLength="12.6" lengthAdjust="spacingAndGlyphs">-36</text><text x="1062.0" y="183.9" text-anchor="start" fill="#fff" font-size="9.5px" letter-spacing="0" textLength="12.6" lengthAdjust="spacingAndGlyphs">-36</text>
<text x="1063.0" y="218.9" text-anchor="start" fill="#000" font-size="9.5px" letter-spacing="0" textLength="12.6" lengthAdjust="spacingAndGlyphs">-48</text><text x="1062.0" y="217.9" text-anchor="start" fill="#fff" font-size="9.5px" letter-spacing="0" textLength="12.6" lengthAdjust="spacingAndGlyphs">-48</text>
<text x="1063.0" y="253.9" text-anchor="start" fill="#000" font-size="9.5px" letter-spacing="0" textLength="12.6" lengthAdjust="spacingAndGlyphs">-60</text><text x="1062.0" y="252.9" text-anchor="start" fill="#fff" font-size="9.5px" letter-spacing="0" textLength="12.6" lengthAdjust="spacingAndGlyphs">-60</text>
<text x="1063.0" y="287.9" text-anchor="start" fill="#000" font-size="9.5px" letter-spacing="0" textLength="12.6" lengthAdjust="spacingAndGlyphs">-72</text><text x="1062.0" y="286.9" text-anchor="start" fill="#fff" font-size="9.5px" letter-spacing="0" textLength="12.6" lengthAdjust="spacingAndGlyphs">-72</text>
<text x="1063.0" y="321.9" text-anchor="start" fill="#000" font-size="9.5px" letter-spacing="0" textLength="12.6" lengthAdjust="spacingAndGlyphs">-84</text><text x="1062.0" y="320.9" text-anchor="start" fill="#fff" font-size="9.5px" letter-spacing="0" textLength="12.6" lengthAdjust="spacingAndGlyphs">-84</text>
<text x="1063.0" y="356.9" text-anchor="start" fill="#000" font-size="9.5px" letter-spacing="0" textLength="12.6" lengthAdjust="spacingAndGlyphs">-96</text><text x="1062.0" y="355.9" text-anchor="start" fill="#fff" font-size="9.5px" letter-spacing="0" textLength="12.6" lengthAdjust="spacingAndGlyphs">-96</text>
<text x="1063.0" y="390.9" text-anchor="start" fill="#000" font-size="9.5px" letter-spacing="0" textLength="17.4" lengthAdjust="spacingAndGlyphs">-108</text><text x="1062.0" y="389.9" text-anchor="start" fill="#fff" font-size="9.5px" letter-spacing="0" textLength="17.4" lengthAdjust="spacingAndGlyphs">-108</text>
<text x="1063.0" y="425.9" text-anchor="start" fill="#000" font-size="9.5px" letter-spacing="0" textLength="17.4" lengthAdjust="spacingAndGlyphs">-120</text><text x="1062.0" y="424.9" text-anchor="start" fill="#fff" font-size="9.5px" letter-spacing="0" textLength="17.4" lengthAdjust="spacingAndGlyphs">-120</text>
<text x="1063.0" y="52.0" text-anchor="start" fill="#000" font-size="9.5px" letter-spacing="0" textLength="10.5" lengthAdjust="spacingAndGlyphs">dB</text><text x="1062.0" y="51.0" text-anchor="start" fill="#fff" font-size="9.5px" letter-spacing="0" textLength="10.5" lengthAdjust="spacingAndGlyphs">dB</text>
<text x="1063.0" y="445.5" text-anchor="start" fill="#000" font-size="9.5px" letter-spacing="0" textLength="10.5" lengthAdjust="spacingAndGlyphs">dB</text><text x="1062.0" y="444.5" text-anchor="start" fill="#fff" font-size="9.5px" letter-spacing="0" textLength="10.5" lengthAdjust="spacingAndGlyphs">dB</text>
</g>
</svg>

<div class="sb" style="left:8px;width:540px"></div>
<div class="sb" style="left:552px;width:540px"></div>
<span class="t" id="st1" style="left:13px;top:472px;font-size:11px;transform:scaleX(0.97)">339.8 Hz, L=-34.98 dB, R=-33.44 dB</span>
<span class="t" id="st2" style="left:557px;top:472px;font-size:11px;transform:scaleX(0.98)">L= 835.92 Hz (G#5 +11), R= 835.77 Hz (G#5 +10)</span>

<div class="cb" style="left:8px;width:120px"><div class="dd"></div></div>
<span class="t" id="c1" style="left:13px;top:494.5px;font-size:12px;transform:scaleX(0.85)">Lines</span>
<span class="t" id="fft" style="left:156px;top:494px;font-size:12px;transform:scaleX(0.854)">FFT Size</span>
<div class="cb" style="left:202px;width:62px"><div class="dd"></div></div>
<span class="t" id="c2" style="left:207px;top:494.5px;font-size:12px;transform:scaleX(0.87)">4096</span>
<div class="cb" style="left:269px;width:135px"><div class="dd"></div></div>
<span class="t" id="c3" style="left:273px;top:494.5px;font-size:12px;transform:scaleX(0.895)">Hanning</span>

<span class="t" id="ref" style="left:10px;top:516.5px;font-size:12px;transform:scaleX(0.883)">Reference</span>
<div class="cb" style="left:61px;top:514px;width:39px;height:18px;border-right-color:#b8c8dc;border-bottom-color:#b8c8dc"></div>
<span class="t" id="refv" style="left:64px;top:517px;font-size:12px;transform:scaleX(0.85)">0</span>
<span class="t" id="dbfs" style="left:102px;top:519px;font-size:12px;transform:scaleX(0.84)">dBFS</span>

<div class="btn" style="left:133px;width:100px">Copy to Clipboard</div>
<div class="btn" style="left:968px;width:60px">Scan</div>
<div class="btn on" style="left:1032px;width:60px">Advanced</div>
</body>
</html>
